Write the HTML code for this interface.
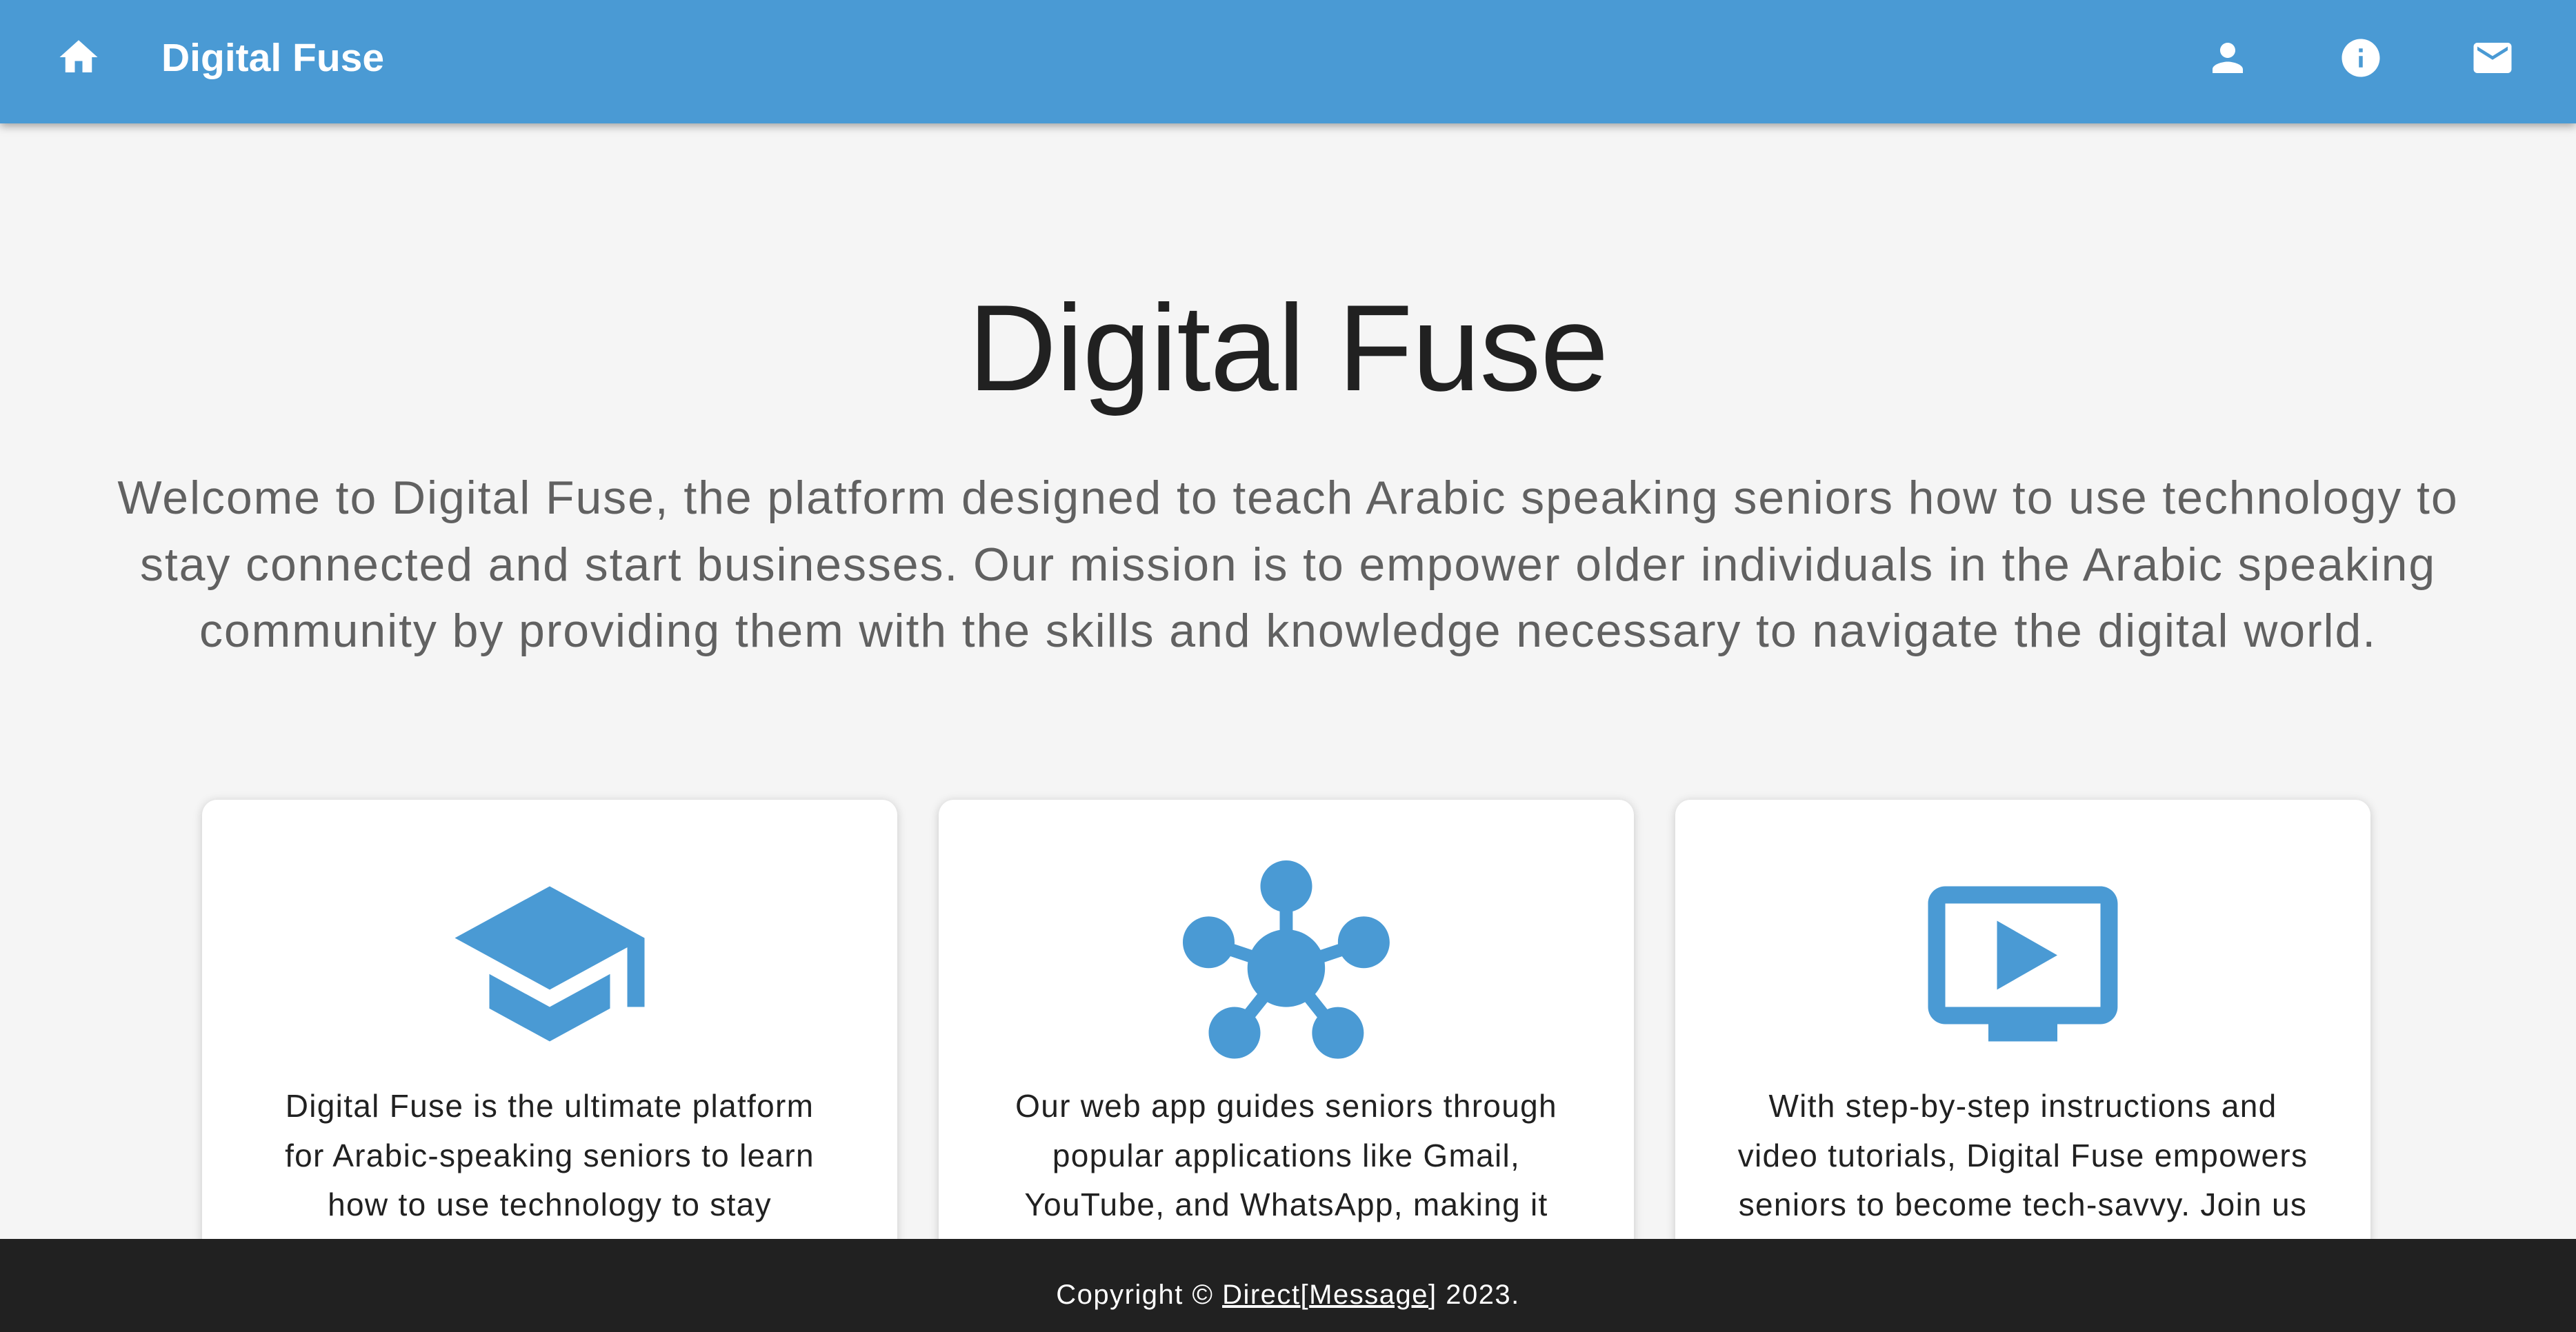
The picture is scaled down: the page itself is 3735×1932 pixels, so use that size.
<!DOCTYPE html>
<html><head><meta charset="utf-8"><style>
*{margin:0;padding:0;box-sizing:border-box}
html,body{width:3735px;height:1932px;overflow:hidden;background:#f5f5f5;font-family:"Liberation Sans",Arial,sans-serif;position:relative}
.hdr{position:absolute;left:0;top:0;width:3735px;height:179px;background:#4a9ad4;box-shadow:0 4px 12px rgba(0,0,0,.35);z-index:2}
.hdr svg{position:absolute;fill:#fff}
.hdr .t{position:absolute;left:234px;top:50px;font-size:57px;line-height:68px;color:#fff;font-weight:bold;letter-spacing:0px}
h1{position:absolute;left:0;width:3735px;top:400px;text-align:center;font-size:178px;line-height:210px;font-weight:normal;color:#212121;letter-spacing:-1px}
.p{position:absolute;left:0;width:3735px;top:674px;text-align:center;font-size:68px;line-height:96.5px;color:#616161;letter-spacing:1.9px}
.card{position:absolute;top:1160px;width:1008px;height:700px;background:#fff;border-radius:22px;box-shadow:0 2px 14px rgba(0,0,0,.18);overflow:hidden}
.card svg{position:absolute;left:354px;top:88px;width:300px;height:300px;fill:#4a9ad4}
.card .tx{position:absolute;left:0;width:1008px;top:409px;text-align:center;font-size:46px;line-height:71.5px;color:#212121;letter-spacing:1.3px}
.ft{position:absolute;left:0;top:1797px;width:3735px;height:135px;background:#212121;color:#fff;text-align:center;font-size:40px;line-height:135px;padding-top:14px;z-index:3;letter-spacing:1.5px}
.ft u{text-decoration:underline}
</style></head><body>
<div class="hdr">
<svg style="left:81px;top:50px;width:66px;height:66px" viewBox="0 0 24 24"><path d="M10 20v-6h4v6h5v-8h3L12 3 2 12h3v8z"/></svg>
<div class="t">Digital Fuse</div>
<svg style="left:3197px;top:51px;width:66px;height:66px" viewBox="0 0 24 24"><path d="M12 12c2.21 0 4-1.79 4-4s-1.79-4-4-4-4 1.79-4 4 1.79 4 4 4zm0 2c-2.67 0-8 1.34-8 4v2h16v-2c0-2.66-5.33-4-8-4z"/></svg>
<svg style="left:3390px;top:51px;width:66px;height:66px" viewBox="0 0 24 24"><path d="M12 2C6.48 2 2 6.48 2 12s4.48 10 10 10 10-4.48 10-10S17.52 2 12 2zm1 15h-2v-6h2v6zm0-8h-2V7h2v2z"/></svg>
<svg style="left:3581px;top:51px;width:66px;height:66px" viewBox="0 0 24 24"><path d="M20 4H4c-1.1 0-1.99.9-1.99 2L2 18c0 1.1.9 2 2 2h16c1.1 0 2-.9 2-2V6c0-1.1-.9-2-2-2zm0 4l-8 5-8-5V6l8 5 8-5v2z"/></svg>
</div>
<h1>Digital Fuse</h1>
<div class="p">Welcome to Digital Fuse, the platform designed to teach Arabic speaking seniors how to use technology to<br>stay connected and start businesses. Our mission is to empower older individuals in the Arabic speaking<br>community by providing them with the skills and knowledge necessary to navigate the digital world.</div>
<div class="card" style="left:293px">
<svg viewBox="0 0 24 24"><path d="M5 13.18v4L12 21l7-3.82v-4L12 17l-7-3.82zM12 3L1 9l11 6 9-4.91V17h2V9L12 3z"/></svg>
<div class="tx">Digital Fuse is the ultimate platform<br>for Arabic-speaking seniors to learn<br>how to use technology to stay</div>
</div>
<div class="card" style="left:1361px">
<svg viewBox="0 0 24 24"><path d="M8.4 18.2c.38.5.6 1.12.6 1.8 0 1.66-1.34 3-3 3s-3-1.34-3-3 1.34-3 3-3c.44 0 .85.1 1.23.26l1.41-1.77c-.92-1.03-1.29-2.39-1.09-3.69l-2.03-.68c-.54.83-1.46 1.38-2.52 1.38-1.66 0-3-1.34-3-3s1.34-3 3-3 3 1.34 3 3c0 .07 0 .14-.01.21l2.03.68c.64-1.21 1.82-2.09 3.22-2.32V5.91C9.96 5.57 9 4.4 9 3c0-1.66 1.34-3 3-3s3 1.34 3 3c0 1.4-.96 2.57-2.25 2.91v2.16c1.4.23 2.58 1.11 3.22 2.32l2.03-.68c-.01-.07-.01-.14-.01-.21 0-1.66 1.34-3 3-3s3 1.34 3 3-1.34 3-3 3c-1.06 0-1.98-.55-2.52-1.37l-2.03.68c.2 1.29-.17 2.65-1.09 3.69l1.41 1.77c.38-.16.79-.26 1.23-.26 1.66 0 3 1.34 3 3s-1.34 3-3 3-3-1.34-3-3c0-.68.22-1.3.6-1.8l-1.41-1.77c-1.35.75-3.01.76-4.37 0L8.4 18.2z"/></svg>
<div class="tx">Our web app guides seniors through<br>popular applications like Gmail,<br>YouTube, and WhatsApp, making it</div>
</div>
<div class="card" style="left:2429px">
<svg viewBox="0 0 24 24"><path d="M21 3H3c-1.11 0-2 .89-2 2v12c0 1.1.89 2 2 2h5v2h8v-2h5c1.1 0 1.99-.9 1.99-2L23 5c0-1.11-.9-2-2-2zm0 14H3V5h18v12zM16 11l-7 4V7z"/></svg>
<div class="tx">With step-by-step instructions and<br>video tutorials, Digital Fuse empowers<br>seniors to become tech-savvy. Join us</div>
</div>
<div class="ft">Copyright © <u>Direct</u>[<u>Message</u>] 2023.</div>
</body></html>
